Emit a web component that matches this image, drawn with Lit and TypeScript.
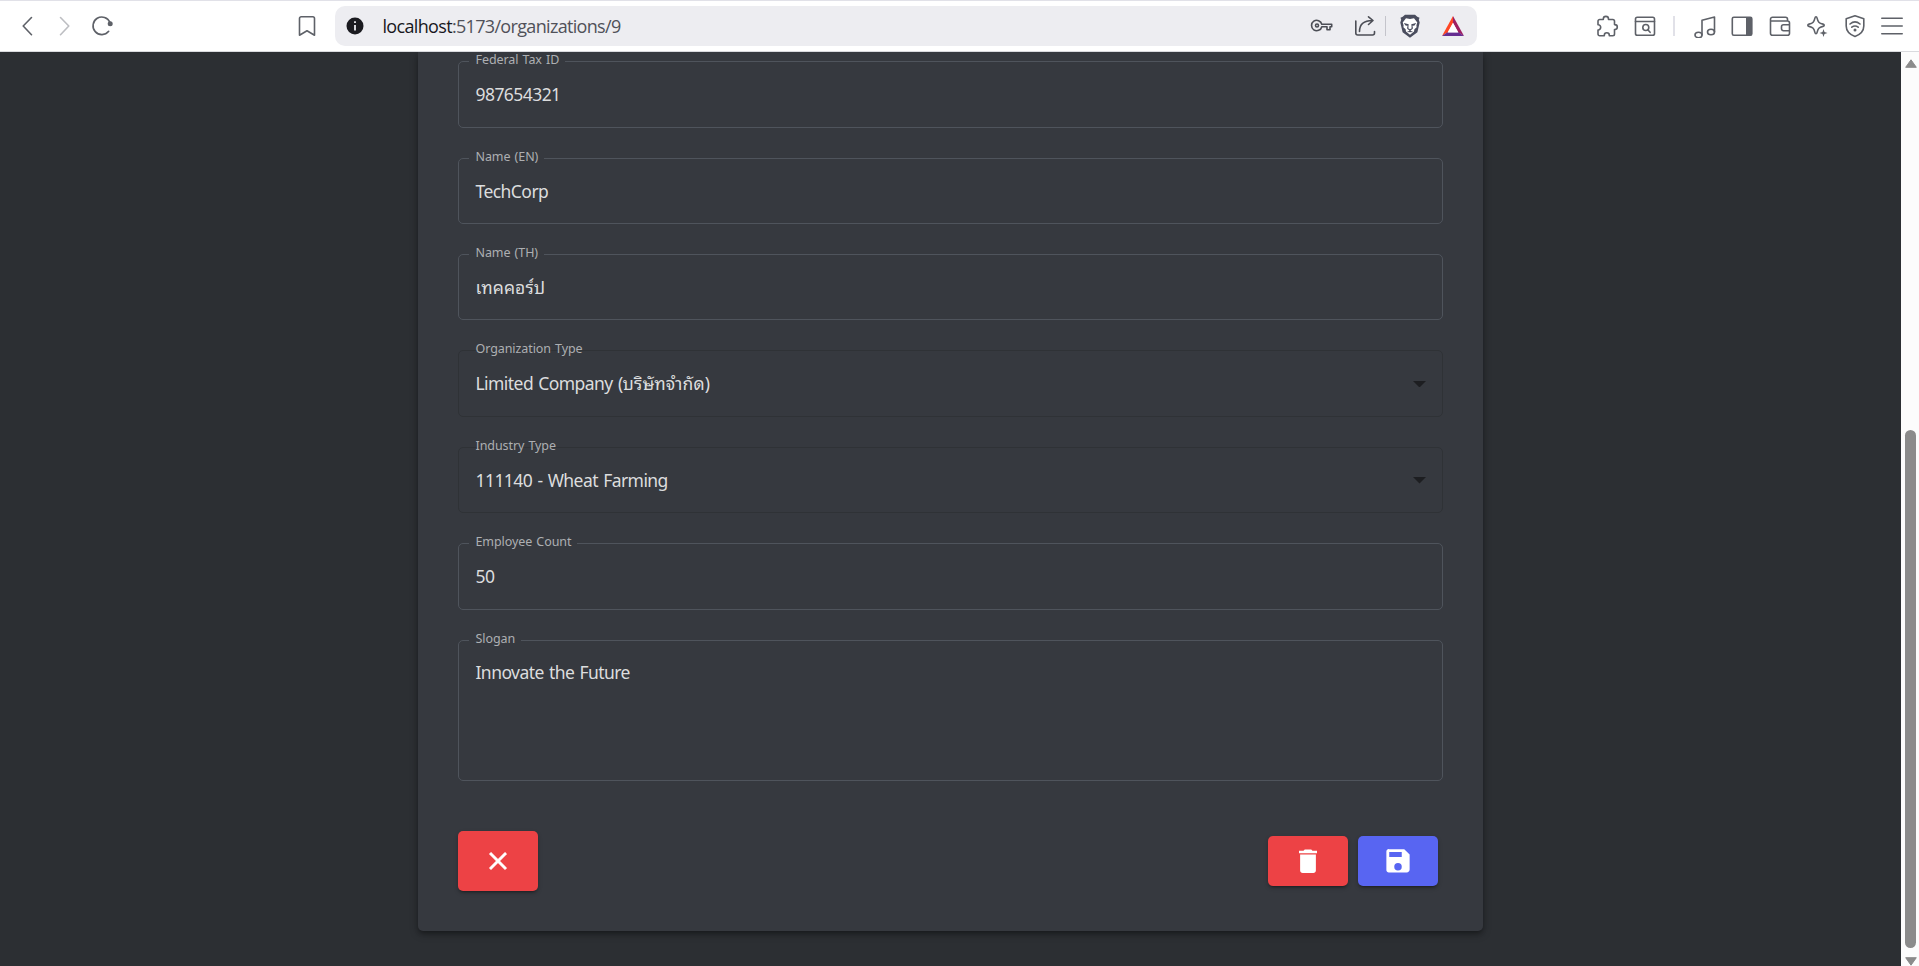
import { LitElement, html, css, svg, nothing } from "lit";
import { customElement, property } from "lit/decorators.js";
import { classMap } from "lit/directives/class-map.js";

const icons: Record<string, unknown> = {
  back: svg`<path d="M16.500 3.500 8.200 12l8.300 8.700"/>`,
  forward: svg`<path d="M7.500 3.500 15.800 12l-8.300 8.700"/>`,
  reload: svg`<path d="M18.700 17.300A8.800 8.800 0 1 1 20 8.500"/><circle class="fill" cx="20.200" cy="9.800" r="2.500"/>`,
  bookmark: svg`<path d="M6.200 2.800h11.600a1.700 1.700 0 0 1 1.700 1.700v16.700L12 16.800l-7.500 4.400V4.500a1.700 1.700 0 0 1 1.700-1.700z"/>`,
  info: svg`<circle class="fill" cx="12" cy="12" r="8.500"/><path class="light" d="M12 11v5.500M12 7.300v1.800"/>`,
  key: svg`<path d="M11.800 10.300h9.900v2.400h-1.700v3h-3v-3h-5.200a5.200 5.200 0 1 1 0-2.400z"/><circle cx="7" cy="11.500" r="1.500"/>`,
  share: svg`<path d="M2.800 7v12a2 2 0 0 0 2 2h14.700a2 2 0 0 0 2-2v-1.500M6.500 17.500C6.500 10 11 6.500 19.500 6.500M15.500 2.800l4.500 3.700-4.500 4"/>`,
  lion: svg`<path class="fill" d="M7 .8h10l2.300 2 2.200 1-.7 2 .9 2.700-2.300 9.700L12 23.700l-7.400-5.500L2.300 8.500l.9-2.700-.7-2 2.200-1z"/><path class="white" d="M8 4.200l4 .8 4-.8 3.300 4.300-.9 2.700.2 2-2.200 2.100-.4 2.300L12 20.800l-4-3.200-.4-2.300-2.200-2.100.2-2-.9-2.700z"/><path class="fill" d="M5.800 9l4.900 1.300-.2 1.600-3-.5zM18.200 9l-4.900 1.300.2 1.600 3-.5zM9.200 12.300l1.500 0-.4 2 1.700 1 1.700-1-.4-2 1.500 0 0 2.500L12 17l-2.800-2.200zM8.800 18l3.200-1.500L15.200 18 12 18.300z"/>`,
  bat: svg`<path style="fill:#ff4724" d="M12 2v7L6.800 18.300 1 22z"/><path style="fill:#9e1f63" d="M12 2v7l5.200 9.300L23 22z"/><path style="fill:#662d91" d="M1 22l5.500-3.700h11L23 22z"/><path style="fill:#fff" d="M12 8.800l5.300 9.600H6.700z"/>`,
  puzzle: svg`<path d="M3 7.200a1.700 1.700 0 0 1 1.700-1.700h3.600V5a2.600 2.600 0 0 1 5.200 0v.5h4.300A1.700 1.700 0 0 1 19.500 7.200v3.400h.3a2.500 2.500 0 0 1 0 5h-.3V20a1.700 1.700 0 0 1-1.700 1.700h-3.500v-.5a2.500 2.500 0 0 0-5 0v.5H4.700A1.700 1.700 0 0 1 3 20v-4h.5a2.700 2.700 0 0 0 0-5.300H3z"/>`,
  find: svg`<rect x="2.500" y="3.200" width="19" height="18" rx="1.800"/><path d="M2.500 7.500h19M14.800 15.800l2.300 2.500"/><circle cx="12.800" cy="13.500" r="3"/>`,
  music: svg`<path d="M9 21V6.200L21.500 3v14.800"/><ellipse cx="5.500" cy="21" rx="3.500" ry="2.800"/><ellipse cx="18" cy="18" rx="3.500" ry="2.800"/>`,
  panel: svg`<rect x="2.300" y="3.200" width="19.500" height="18" rx="1.500"/><path class="fill" d="M16 3h5.800v18.300H16z"/>`,
  wallet: svg`<path d="M19.500 7V5.200a2 2 0 0 0-2-2h-13a2 2 0 0 0-2 2v14a2 2 0 0 0 2 2h15a2 2 0 0 0 2-2V9a2 2 0 0 0-2-2h-17M21.500 10.700h-6a2 2 0 0 0-2 2v2a2 2 0 0 0 2 2h6"/>`,
  spark: svg`<path d="M11 2.800c.5 0 .9.500 1.100 1.300.9 4 1.800 5 5.900 6 1.600.4 1.600 1.900 0 2.300-4.100 1-5 2-5.900 6-.4 1.700-1.800 1.700-2.200 0-.9-4-1.800-5-5.900-6-1.600-.4-1.600-1.900 0-2.300 4.100-1 5-2 5.900-6 .2-.8.600-1.300 1.100-1.300z"/><path class="fill" d="M18.500 15l1 3 3 1-3 1-1 3-1-3-3-1 3-1z"/>`,
  shield: svg`<path d="M12 1.700l8.800 3v7.200c0 5-3.600 8.500-8.800 10.600-5.200-2.100-8.800-5.600-8.800-10.600V4.700z"/><path d="M7 10c3-2.500 7-2.500 10 0M8.800 13.200c2-1.500 4.400-1.500 6.400 0"/><circle class="fill" cx="12" cy="16" r="1.500"/>`,
  menu: svg`<path d="M1.800 4.300h20.400M1.800 12h20.400M1.800 19.700h20.400"/>`,
};

const icon = (name: string) =>
  html`<svg class="icon ${name}" viewBox="0 0 24 24" aria-hidden="true">${icons[name]}</svg>`;

@customElement("browser-bar")
class BrowserBar extends LitElement {
  static styles = css`
    :host {
      display: flex;
      align-items: center;
      box-sizing: border-box;
      height: 52px;
      background: #fff;
      border-top: 1px solid #e1e1e8;
      border-bottom: 1px solid #d9dade;
      padding: 0 15px 0 15px;
      color: #5e6168;
    }
    .icon {
      width: 24px;
      height: 24px;
      flex: none;
      fill: none;
      stroke: currentColor;
      stroke-width: 1.600;
      stroke-linejoin: round;
      stroke-linecap: round;
    }
    .fill { fill: currentColor; stroke: none; }
    .nav { display: flex; gap: 13.500px; width: 280px; }
    .forward { color: #bdbec2; }
    .address {
      display: flex;
      align-items: center;
      box-sizing: border-box;
      width: 1142px;
      height: 40px;
      margin-left: 16px;
      padding: 0 12px 0 8px;
      border-radius: 10px;
      background: #ededf1;
      color: #4c4e56;
    }
    .info { color: #1b1b20; }
    .light { stroke: #ededf1; stroke-width: 1.800; stroke-linecap: butt; }
    .url {
      flex: 1;
      margin-left: 15.500px;
      font: 18px/24px "Open Sans", "Noto Sans", sans-serif;
      letter-spacing: -0.670px;
      color: #505159;
      white-space: nowrap;
    }
    .host { color: #17171c; }
    .share { margin-left: 19px; }
    .sep { width: 1px; height: 20px; background: #c4c4cb; margin: 0 12px 0 8px; }
    .lion { color: #4a4d5e; }
    .white { fill: #fff; stroke: none; }
    .bat { stroke: none; margin-left: 19.500px; }
    .tools { display: flex; align-items: center; margin-left: auto; gap: 13.500px; }
    .tools .sep { width: 2px; background: #e1e1e8; margin: 0 4px 0 3px; }
  `;
  render() {
    return html`
      <nav class="nav">${icon("back")}${icon("forward")}${icon("reload")}</nav>
      ${icon("bookmark")}
      <div class="address">
        ${icon("info")}
        <span class="url"><span class="host">localhost</span>:5173/organizations/9</span>
        ${icon("key")}${icon("share")}<span class="sep"></span>${icon("lion")}${icon("bat")}
      </div>
      <div class="tools">
        ${icon("puzzle")}${icon("find")}<span class="sep"></span>${icon("music")}${icon("panel")}
        ${icon("wallet")}${icon("spark")}${icon("shield")}${icon("menu")}
      </div>
    `;
  }
}

// Thai runs get their own span so that they can use a looped Thai face.
const withThai = (text: string) =>
  text
    .split(/([\u0E00-\u0E7F]+)/)
    .map((run) => (/[\u0E00-\u0E7F]/.test(run) ? html`<span class="thai" lang="th">${run}</span>` : run));

@customElement("form-field")
class FormField extends LitElement {
  @property() label = "";
  @property() value = "";
  @property() kind = "text";
  static styles = css`
    :host { display: block; }
    .field {
      position: relative;
      display: flex;
      align-items: center;
      justify-content: space-between;
      box-sizing: border-box;
      height: 66.400px;
      padding: 0 16px 0 16.500px;
      border: 1px solid #4f545c;
      border-radius: 5px;
      color: #dcddde;
      font: 450 17.500px/28px "Noto Sans", sans-serif;
      letter-spacing: -0.560px;
      word-spacing: 1.200px;
    }
    .select { border-color: #2f3236; padding-bottom: 1px; }
    .area { height: 141.300px; align-items: flex-start; padding-top: 17px; }
    .thai {
      font-family: "Noto Sans Thai Looped", "Noto Looped Thai", "Loma", "Waree", "Garuda", "Noto Sans Thai", sans-serif;
      font-size: 17.500px;
      line-height: 1;
      letter-spacing: 0.100px;
    }
    .label {
      position: absolute;
      left: 10px;
      top: -12px;
      padding: 0 6px 0 6.500px;
      background: #36393f;
      color: #adafb2;
      font-size: 12.500px;
      font-weight: 400;
      line-height: 20px;
      letter-spacing: -0.080px;
      word-spacing: 1px;
      white-space: nowrap;
    }
    .select .label { background: none; }
    .arrow { width: 13px; height: 6.500px; fill: #1d1e21; margin: 2px 0.500px 0 0; }
  `;
  render() {
    const classes = { field: true, select: this.kind === "select", area: this.kind === "area" };
    return html`<div class=${classMap(classes)}>
      <span class="label">${this.label}</span>
      <span class="value">${withThai(this.value)}</span>
      ${this.kind === "select"
        ? html`<svg class="arrow" viewBox="0 0 14 7"><path d="M0 0h14L7 7z" /></svg>`
        : nothing}
    </div>`;
  }
}

const fields = [
  { label: "Federal Tax ID", value: "987654321", kind: "text" },
  { label: "Name (EN)", value: "TechCorp", kind: "text" },
  { label: "Name (TH)", value: "เทคคอร์ป", kind: "text" },
  { label: "Organization Type", value: "Limited Company (บริษัทจำกัด)", kind: "select" },
  { label: "Industry Type", value: "111140 - Wheat Farming", kind: "select" },
  { label: "Employee Count", value: "50", kind: "text" },
  { label: "Slogan", value: "Innovate the Future", kind: "area" },
];

@customElement("app-root")
class AppRoot extends LitElement {
  static styles = css`
    :host {
      display: flex;
      flex-direction: column;
      height: 100vh;
      overflow: hidden;
      background: #2c2f33;
    }
    browser-bar { flex: none; position: relative; z-index: 1; }
    .viewport { display: flex; flex: 1; min-height: 0; }
    .page { flex: 1; display: flex; justify-content: center; align-items: flex-start; overflow: hidden; }
    .card {
      box-sizing: border-box;
      width: 1065px;
      height: 879px;
      padding: 9.250px 40px 40px;
      background: #36393f;
      border-radius: 0 0 5px 5px;
      box-shadow: 0 3px 4px -1px rgba(0, 0, 0, 0.25), 0 3px 8px rgba(0, 0, 0, 0.3);
    }
    .fields { display: flex; flex-direction: column; gap: 30px; }
    .actions { display: flex; align-items: center; gap: 10px; margin-top: 50px; padding-right: 5px; }
    .btn {
      display: flex;
      align-items: center;
      justify-content: center;
      width: 80px;
      height: 50px;
      padding: 0;
      border: 0;
      border-radius: 5px;
      background: #ed4245;
      box-shadow: 0 3px 2px -2px rgba(0, 0, 0, 0.25), 0 2px 4px rgba(0, 0, 0, 0.25);
    }
    .cancel { height: 60px; margin-right: auto; }
    .save { background: #5865f2; }
    .glyph { fill: #fff; width: 30px; height: 30px; }
    .cross { stroke: #fff; stroke-width: 0.400; }
    .scroll {
      display: flex;
      flex-direction: column;
      align-items: center;
      box-sizing: border-box;
      width: 18px;
      padding: 7px 0 0 1px;
      background: #fcfcfc;
    }
    .tri { width: 12px; height: 9px; flex: none; fill: #8b8b8b; stroke: #8b8b8b; }
    .track { flex: 1; display: flex; padding: 362px 0 9px; }
    .thumb { width: 11px; background: #8b8b8b; border-radius: 6px; }
  `;
  render() {
    return html`
      <browser-bar></browser-bar>
      <div class="viewport">
        <main class="page">
          <section class="card">
            <div class="fields">
              ${fields.map(
                (f) => html`<form-field .label=${f.label} .value=${f.value} .kind=${f.kind}></form-field>`
              )}
            </div>
            <div class="actions">
              <button class="btn cancel" aria-label="Cancel">
                <svg class="glyph cross" viewBox="0 0 24 24">
                  <path d="M19 6.410 17.590 5 12 10.590 6.410 5 5 6.410 10.590 12 5 17.590 6.410 19 12 13.410 17.590 19 19 17.590 13.410 12z" />
                </svg>
              </button>
              <button class="btn" aria-label="Delete">
                <svg class="glyph" viewBox="0 0 24 24">
                  <path d="M5.700 19.500c0 1.100.9 2 2 2h8.600c1.100 0 2-.9 2-2V6.700H5.700zM19.200 3.700h-3.600l-1-1H9.400l-1 1H4.800v2h14.400z" />
                </svg>
              </button>
              <button class="btn save" aria-label="Save">
                <svg class="glyph" viewBox="0 0 24 24">
                  <path fill-rule="evenodd" d="M17 2.700H5a2 2 0 0 0-2.300 2.300v14a2 2 0 0 0 2.300 2.300h14c1.300 0 2.300-.9 2.300-2.300V7zm-5 17a3 3 0 1 1 0-6 3 3 0 0 1 0 6zm3-10.700H5V5h10z" transform="translate(0 -.2)" />
                </svg>
              </button>
            </div>
          </section>
        </main>
        <aside class="scroll">
          <svg class="tri" viewBox="0 0 12 9"><path stroke-linejoin="round" d="M6 .800 11.300 8.300H.7z" /></svg>
          <div class="track"><div class="thumb"></div></div>
          <svg class="tri" viewBox="0 0 12 9"><path stroke-linejoin="round" d="M6 8.200 11.300.700H.7z" /></svg>
        </aside>
      </div>
    `;
  }
}
